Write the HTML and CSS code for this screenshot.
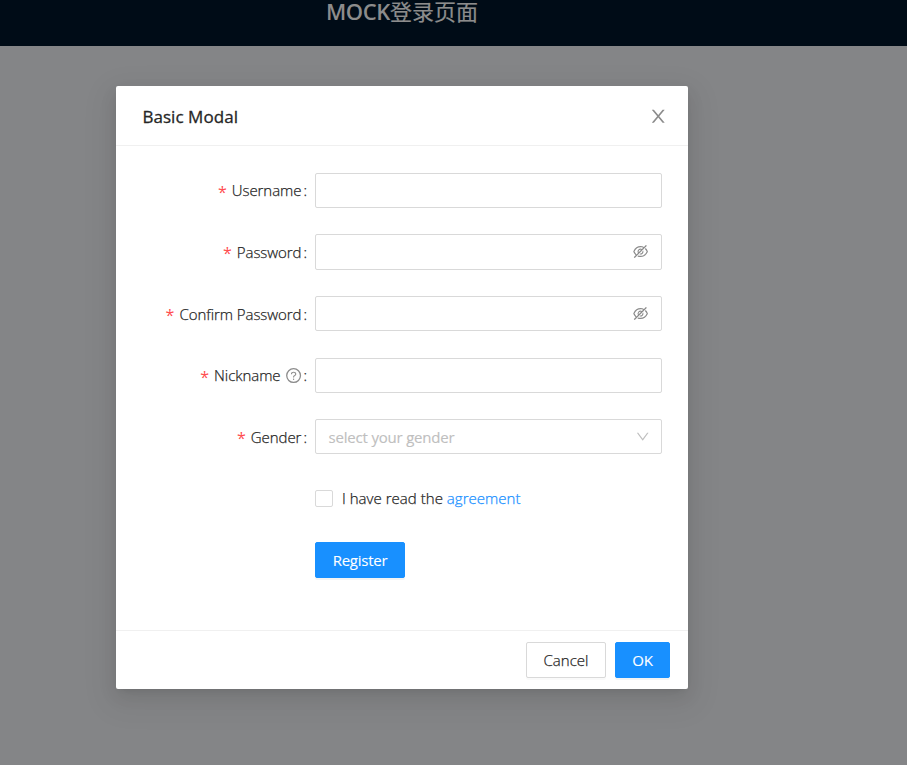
FILE: index.html
```html
<!DOCTYPE html>
<html lang="zh">
<head>
<meta charset="utf-8">
<title>MOCK登录页面</title>
<link rel="stylesheet" href="styles.css">
</head>
<body>
<svg class="defs" aria-hidden="true">
  <symbol id="close" viewBox="0 0 1024 1024"><path d="M563.8 512l262.5-312.9c4.4-5.2.7-13.1-6.1-13.1h-79.8c-4.7 0-9.2 2.1-12.3 5.7L511.6 449.8 295.1 191.7c-3-3.6-7.5-5.7-12.3-5.7H203c-6.8 0-10.5 7.9-6.1 13.1L459.4 512 196.9 824.9A7.95 7.95 0 00203 838h79.8c4.7 0 9.2-2.1 12.3-5.7l216.5-258.1 216.5 258.1c3 3.6 7.5 5.7 12.3 5.7h79.8c6.8 0 10.5-7.9 6.1-13.1L563.8 512z"/></symbol>
  <symbol id="down" viewBox="0 0 1024 1024"><path d="M884 256h-75c-5.1 0-9.9 2.5-12.9 6.6L512 654.2 227.9 262.6c-3-4.1-7.8-6.6-12.9-6.6h-75c-6.5 0-10.3 7.4-6.5 12.7l352.6 486.1c12.8 17.6 39 17.6 51.7 0l352.6-486.1c3.9-5.3.1-12.7-6.4-12.7z"/></symbol>
  <symbol id="question" viewBox="0 0 1024 1024"><circle cx="512" cy="512" r="410" fill="none" stroke="currentColor" stroke-width="76"/><path d="M623.6 316.7C593.6 290.4 554 276 512 276s-81.6 14.5-111.6 40.7C369.2 344 352 380.7 352 420v7.6c0 4.4 3.6 8 8 8h48c4.4 0 8-3.6 8-8V420c0-44.1 43.1-80 96-80s96 35.9 96 80c0 31.1-22 59.6-56.1 72.7-21.2 8.1-39.2 22.3-52.1 40.9-13.1 19-19.9 41.8-19.9 64.9V620c0 4.4 3.6 8 8 8h48c4.4 0 8-3.6 8-8v-22.7a48.3 48.3 0 0130.9-44.8c59-22.7 97.1-74.7 97.1-132.5.1-39.3-17.1-76-48.3-103.3zM472 732a40 40 0 1080 0 40 40 0 10-80 0z"/></symbol>
  <symbol id="eye-off" viewBox="0 0 1024 1024"><path d="M942.2 486.2Q889.47 375.11 816.7 305l-50.88 50.88C807.31 395.53 843.45 447.4 874.7 512 791.5 684.2 673.4 766 512 766q-72.67 0-133.87-22.38L323 798.75Q408 838 512 838q288.3 0 430.2-300.3a60.29 60.29 0 000-51.5zm-63.57-320.64L836 122.88a8 8 0 00-11.32 0L715.31 232.2Q624.86 186 512 186q-288.3 0-430.2 300.3a60.3 60.3 0 000 51.5q56.69 119.4 136.5 191.41L112.48 835a8 8 0 000 11.31L155.17 889a8 8 0 0011.31 0l712.15-712.12a8 8 0 000-11.32zM149.3 512C232.6 339.8 350.7 258 512 258c54.54 0 104.13 9.36 149.12 28.39l-70.3 70.3a176 176 0 00-238.13 238.13l-83.42 83.42C223.1 637.49 183.3 582.28 149.3 512zm246.7 0a112.11 112.11 0 01146.2-106.69L401.31 546.2A112 112 0 01396 512z"/><path d="M508 624c-3.46 0-6.87-.16-10.25-.47l-52.82 52.82a176.09 176.09 0 00227.42-227.42l-52.82 52.82c.31 3.38.47 6.79.47 10.25a111.94 111.94 0 01-112 112z"/></symbol>
</svg>
<header class="topbar"><h1><span class="latin">MOCK</span>登录页面</h1></header>
<main class="modal">
  <div class="modal-header">
    <h2>Basic Modal</h2>
    <svg class="icon close"><use href="#close"/></svg>
  </div>
  <form class="modal-body">
    <div class="row"><label><i>*</i><span class="name">Username</span><b>:</b></label><div class="field"></div></div>
    <div class="row"><label><i>*</i><span class="name">Password</span><b>:</b></label><div class="field"><svg class="icon eye"><use href="#eye-off"/></svg></div></div>
    <div class="row"><label><i>*</i><span class="name">Confirm Password</span><b>:</b></label><div class="field"><svg class="icon eye"><use href="#eye-off"/></svg></div></div>
    <div class="row"><label><i>*</i><span class="name">Nickname</span><svg class="icon help"><use href="#question"/></svg><b>:</b></label><div class="field"></div></div>
    <div class="row"><label><i>*</i><span class="name">Gender</span><b>:</b></label><div class="field"><span class="placeholder">select your gender</span><svg class="icon arrow"><use href="#down"/></svg></div></div>
    <div class="row tail"><span class="checkbox"></span><span class="agree">I have read the <a>agreement</a></span></div>
    <div class="row tail"><button type="button" class="btn primary register">Register</button></div>
  </form>
  <div class="modal-footer">
    <button type="button" class="btn cancel">Cancel</button>
    <button type="button" class="btn primary ok">OK</button>
  </div>
</main>
</body>
</html>
```
FILE: styles.css
```css
* { box-sizing: border-box; }
body {
  margin: 0;
  height: 765px;
  overflow: hidden;
  background: #848587;
  font-family: "Open Sans", "Noto Sans CJK SC", sans-serif;
  font-size: 15px;
  color: #262626;
}
.defs { position: absolute; width: 0; height: 0; }
.topbar {
  height: 46px;
  background: #000c17;
  color: #8c8c8c;
}
.topbar h1 {
  margin: 0;
  padding-left: 326px;
  font-size: 22px;
  font-weight: 400;
  line-height: 23px;
  white-space: nowrap;
  -webkit-text-stroke: 0.2px;
}
.latin { font-weight: 600; letter-spacing: -0.4px; -webkit-text-stroke: 0; }
.modal {
  width: 572px;
  height: 603px;
  margin: 40px 0 0 116px;
  background: #fff;
  border-radius: 2px;
  box-shadow: 0 3px 7px -4px rgba(0,0,0,.12), 0 7px 18px rgba(0,0,0,.08), 0 10px 31px 9px rgba(0,0,0,.05);
}
.modal-header {
  height: 60px;
  padding: 0 19.5px 0 26.4px;
  border-bottom: 1px solid #f0f0f0;
  display: flex;
  align-items: center;
  justify-content: space-between;
}
.modal-header h2 { margin: 0; font-size: 17px; font-weight: 400; line-height: 24px; letter-spacing: 0.05px; padding-top: 2px; -webkit-text-stroke: 0.3px; }
.icon { fill: currentColor; flex: none; display: block; }
.close { width: 20.5px; height: 20.5px; color: #8c8c8c; margin-top: 2px; }
.modal-body { padding: 26.8px 26.4px 0; height: 484px; }
.row {
  display: flex;
  align-items: center;
  height: 35.2px;
  margin-bottom: 26.4px;
}
.row label {
  width: 172.6px;
  padding-right: 8px;
  display: flex;
  align-items: center;
  justify-content: flex-end;
  line-height: 24px;
  white-space: nowrap;
}
.row label i { color: #ff4d4f; font-style: normal; font-size: 16px; margin-right: 5px; padding-top: 3px; }
.row label b { font-weight: 300; margin-left: 2px; }
.name, .agree, .row label b { font-weight: 300; -webkit-text-stroke: 0.25px; }
.name { letter-spacing: -0.06px; }
.help { width: 17.2px; height: 17.2px; color: #8c8c8c; margin: 0 -0.8px 0 4.5px; }
.field {
  flex: 1;
  height: 35.2px;
  border: 1px solid #d9d9d9;
  border-radius: 2px;
  padding: 0 11.4px 0 12.6px;
  display: flex;
  align-items: center;
  justify-content: flex-end;
}
.eye { width: 17.2px; height: 17.2px; color: #8c8c8c; }
.placeholder { margin-right: auto; color: #bfbfbf; letter-spacing: -0.2px; -webkit-text-stroke: 0.15px; }
.arrow { width: 15.4px; height: 15.4px; color: #bfbfbf; margin-right: -1px; }
.tail { padding-left: 172.6px; }
.checkbox { width: 18px; height: 17px; border: 1px solid #d9d9d9; border-radius: 2px; margin-right: 9px; }
.agree { white-space: pre; letter-spacing: 0.03px; }
.agree a { color: #1890ff; }
.btn {
  height: 36px;
  border: 1px solid #d9d9d9;
  border-radius: 2px;
  background: #fff;
  color: #262626;
  font: 300 15px/24px "Open Sans", sans-serif;
  -webkit-text-stroke: 0.25px;
  padding: 0;
  box-shadow: 0 2px 0 rgba(0,0,0,.02);
}
.primary { background: #1890ff; border-color: #1890ff; color: #fff; font-weight: 400; box-shadow: 0 2px 0 rgba(0,0,0,.045); -webkit-text-stroke: 0.1px; }
.register { width: 90px; letter-spacing: -0.25px; }
.cancel { width: 80px; }
.ok { width: 55px; letter-spacing: -0.2px; }
.modal-footer {
  height: 59px;
  padding: 11px 18px 0 0;
  border-top: 1px solid #f0f0f0;
  display: flex;
  justify-content: flex-end;
  gap: 9px;
}
```
